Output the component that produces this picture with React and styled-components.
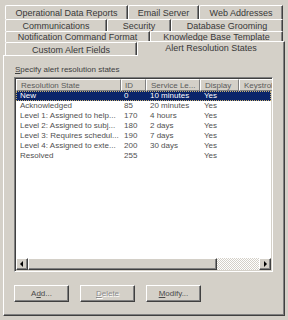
import React from 'react';
import styled, {createGlobalStyle} from 'styled-components';

const GlobalStyle = createGlobalStyle`
  html, body {
    margin: 0;
    padding: 0;
    background: #d4d0c8;
  }
  body {
    font-family: "Liberation Sans", Arial, sans-serif;
  }
`;

const Dialog = styled.div`
  width: 288px;
  height: 320px;
  padding-top: 5px;
  box-sizing: border-box;
  background: #d4d0c8;
  overflow: hidden;
`;

const TabRow = styled.div`
  display: flex;
  margin-left: 5px;
  width: ${p => p.$wide ? 280 : 278}px;
  height: ${p => p.$h}px;
  align-items: stretch;
`;

const Tab = styled.div`
  position: relative;
  box-sizing: border-box;
  width: ${p => p.$w}px;
  flex: none;
  display: flex;
  align-items: center;
  justify-content: center;
  padding-top: ${p => p.$down || 0}px;
  font-size: 9px;
  color: #383838;
  white-space: nowrap;
  background: #d4d0c8;
  border-top: 1px solid #fff;
  border-left: 1px solid #fff;
  border-right: 1px solid #404040;
  box-shadow: inset -1px 0 0 #808080;
  border-top-left-radius: 2px;
`;

const ActiveTab = styled(Tab)`
  z-index: 1;
  margin-top: -1px;
  height: 15px;
  padding-bottom: 3px;
`;

const Panel = styled.div`
  position: relative;
  box-sizing: border-box;
  margin-left: 3px;
  width: 282px;
  height: 261px;
  padding: 9px 0 0 10px;
  border-top: 1px solid #fff;
  border-left: 1px solid #fff;
  border-right: 1px solid #404040;
  border-bottom: 1px solid #404040;
  box-shadow: inset -1px -1px 0 #808080;
`;

const Label = styled.div`
  font-size: 8px;
  line-height: 10px;
  color: #404040;
  height: 10px;
  margin-left: 1px;
`;

const Key = styled.span`
  text-decoration: underline;
`;

const ListView = styled.div`
  margin-top: 2px;
  width: 259px;
  height: 195px;
  box-sizing: border-box;
  background: #fff;
  border-top: 1px solid #808080;
  border-left: 1px solid #808080;
  border-right: 1px solid #fff;
  border-bottom: 1px solid #fff;
  box-shadow: inset 1px 1px 0 #404040, inset -1px -1px 0 #d4d0c8;
  padding: 1px;
  display: flex;
  flex-direction: column;
  overflow: hidden;
`;

const HeaderRow = styled.div`
  display: flex;
  height: 12px;
  flex: none;
  background: #d4d0c8;
`;

const HeaderCell = styled.div`
  box-sizing: border-box;
  width: ${p => p.$w}px;
  flex: none;
  padding-left: ${p => p.$pad || 4}px;
  font-size: 8px;
  line-height: 11px;
  color: #5a5a5a;
  white-space: nowrap;
  overflow: hidden;
  border-top: 1px solid #fff;
  border-left: 1px solid #fff;
  border-right: 1px solid #808080;
  border-bottom: 1px solid #808080;
`;

const Rows = styled.div`
  flex: 1;
`;

const Row = styled.div`
  display: flex;
  height: 10px;
  box-sizing: border-box;
  background: ${p => p.$selected ? '#0a246a' : 'transparent'};
  color: ${p => p.$selected ? '#fff' : '#505050'};
  outline: ${p => p.$selected ? '1px dotted #c8b070' : 'none'};
  outline-offset: -1px;
`;

const Cell = styled.div`
  box-sizing: border-box;
  width: ${p => p.$w}px;
  flex: none;
  padding-left: ${p => p.$pad || 4}px;
  font-size: 8px;
  line-height: 10px;
  white-space: nowrap;
  overflow: hidden;
`;

const ScrollBar = styled.div`
  display: flex;
  height: 12px;
  flex: none;
`;

const ScrollButton = styled.div`
  box-sizing: border-box;
  width: 12px;
  height: 12px;
  flex: none;
  background: #d4d0c8;
  border-top: 1px solid #fff;
  border-left: 1px solid #fff;
  border-right: 1px solid #404040;
  border-bottom: 1px solid #404040;
  box-shadow: inset -1px -1px 0 #808080;
  display: flex;
  align-items: center;
  justify-content: center;
`;

const Thumb = styled(ScrollButton)`
  width: 189px;
`;

const Track = styled.div`
  flex: 1;
  background-color: #fff;
  background-image: linear-gradient(45deg, #d4d0c8 25%, transparent 25%, transparent 75%, #d4d0c8 75%),
    linear-gradient(45deg, #d4d0c8 25%, transparent 25%, transparent 75%, #d4d0c8 75%);
  background-size: 2px 2px;
  background-position: 0 0, 1px 1px;
`;

const Arrow = styled.div`
  width: 0;
  height: 0;
  border-top: 3px solid transparent;
  border-bottom: 3px solid transparent;
  ${p => p.$dir === 'left'
    ? 'border-right: 3px solid #000; margin-left: -1px;'
    : 'border-left: 3px solid #000; margin-left: 1px;'}
`;

const ButtonRow = styled.div`
  display: flex;
  gap: 11px;
  margin-top: 13px;
`;

const Button = styled.div`
  box-sizing: border-box;
  width: 55px;
  height: 17px;
  background: #d4d0c8;
  border-top: 1px solid #fff;
  border-left: 1px solid #fff;
  border-right: 1px solid #404040;
  border-bottom: 1px solid #404040;
  box-shadow: inset -1px -1px 0 #808080;
  display: flex;
  align-items: center;
  justify-content: center;
  font-size: 8px;
  color: ${p => p.$disabled ? '#8a8a8a' : '#4a4a4a'};
  text-shadow: ${p => p.$disabled ? '1px 1px 0 #fff' : 'none'};
`;

const columns = [
  {title: 'Resolution State', w: 105},
  {title: 'ID', w: 25, pad: 3},
  {title: 'Service Le...', w: 54},
  {title: 'Display', w: 39},
  {title: 'Keystrol', w: 60},
];

const states = [
  ['New', '0', '10 minutes', 'Yes', ''],
  ['Acknowledged', '85', '20 minutes', 'Yes', ''],
  ['Level 1: Assigned to help...', '170', '4 hours', 'Yes', ''],
  ['Level 2: Assigned to subj...', '180', '2 days', 'Yes', ''],
  ['Level 3: Requires schedul...', '190', '7 days', 'Yes', ''],
  ['Level 4: Assigned to exte...', '200', '30 days', 'Yes', ''],
  ['Resolved', '255', '', 'Yes', ''],
];

const App = () => {
  return (
    <Dialog>
      <GlobalStyle/>
      <TabRow $h={14}>
        <Tab $w={123}>Operational Data Reports</Tab>
        <Tab $w={71}>Email Server</Tab>
        <Tab $w={84}>Web Addresses</Tab>
      </TabRow>
      <TabRow $h={12}>
        <Tab $w={102}>Communications</Tab>
        <Tab $w={64}>Security</Tab>
        <Tab $w={112}>Database Grooming</Tab>
      </TabRow>
      <TabRow $h={11}>
        <Tab $w={145}>Notification Command Format</Tab>
        <Tab $w={133}>Knowledge Base Template</Tab>
      </TabRow>
      <TabRow $h={13} $wide>
        <Tab $w={132} $down={1}>Custom Alert Fields</Tab>
        <ActiveTab $w={148}>Alert Resolution States</ActiveTab>
      </TabRow>
      <Panel>
        <Label><Key>S</Key>pecify alert resolution states</Label>
        <ListView>
          <HeaderRow>
            {columns.map(c => (
              <HeaderCell key={c.title} $w={c.w} $pad={c.pad}>{c.title}</HeaderCell>
            ))}
          </HeaderRow>
          <Rows>
            {states.map((s, i) => (
              <Row key={s[0]} $selected={i === 0}>
                {s.map((v, j) => (
                  <Cell key={j} $w={columns[j].w} $pad={columns[j].pad}>{v}</Cell>
                ))}
              </Row>
            ))}
          </Rows>
          <ScrollBar>
            <ScrollButton><Arrow $dir="left"/></ScrollButton>
            <Thumb/>
            <Track/>
            <ScrollButton><Arrow $dir="right"/></ScrollButton>
          </ScrollBar>
        </ListView>
        <ButtonRow>
          <Button>A<Key>d</Key>d...</Button>
          <Button $disabled><Key>D</Key>elete</Button>
          <Button><Key>M</Key>odify...</Button>
        </ButtonRow>
      </Panel>
    </Dialog>
  );
};

export default App;
